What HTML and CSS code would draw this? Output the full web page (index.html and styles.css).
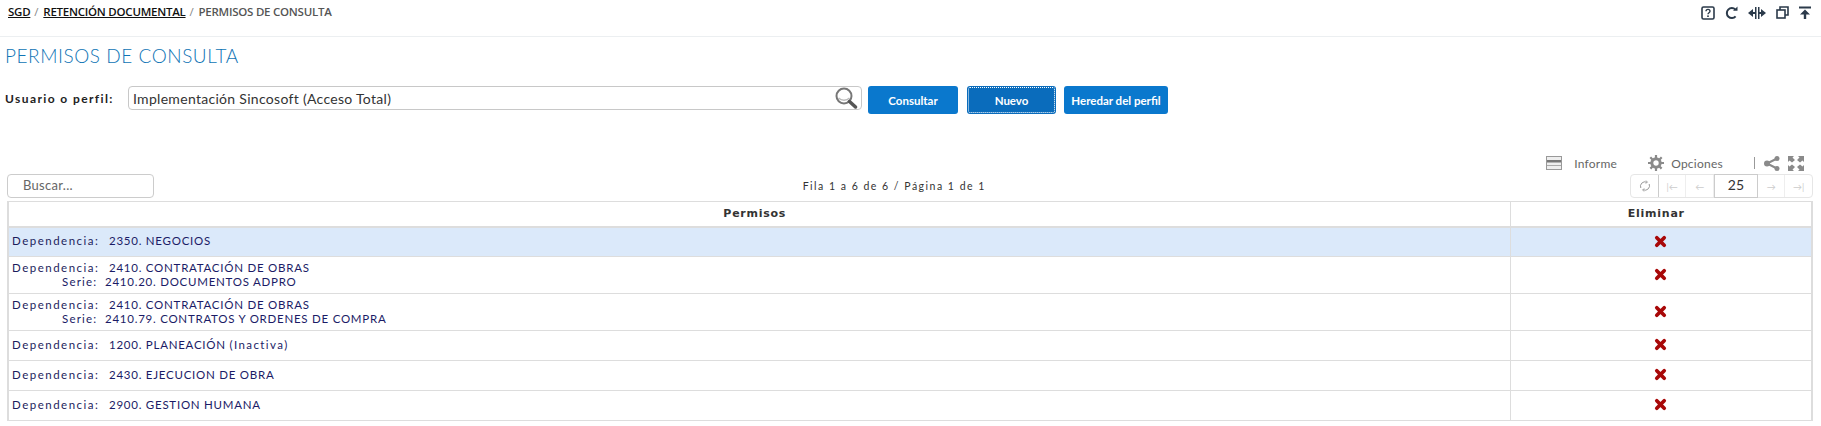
FILE: index.html
```html
<!DOCTYPE html>
<html>
  <head>
    <meta charset="utf-8">
    <title>Permisos de consulta</title>
    <link rel="stylesheet" href="styles.css">
  </head>
  <body>
    <svg class="defs" width="0" height="0">
      <symbol id="x-icon" viewBox="0 0 14 14"><path d="M3 3l8 8M11 3l-8 8" stroke="#a80808" stroke-width="4" stroke-linecap="round"/></symbol>
    </svg>

    <header class="topbar">
      <nav class="crumbs">
        <a href="#">SGD</a><span class="sep">/</span><a href="#">RETENCIÓN DOCUMENTAL</a><span class="sep">/</span><span>PERMISOS DE CONSULTA</span>
      </nav>
      <div class="top-icons">
        <svg width="14" height="14" viewBox="0 0 14 14"><rect x="1" y="1" width="12" height="12" rx="1.5" fill="none" stroke="#2b3a4a" stroke-width="1.6"/><path d="M5 5.2c0-2.4 4-2.4 4 0 0 1.5-2 1.5-2 3" fill="none" stroke="#2b3a4a" stroke-width="1.4"/><rect x="6.2" y="9.4" width="1.6" height="1.6" fill="#2b3a4a"/></svg>
        <svg width="13" height="14" viewBox="0 0 13 14"><path d="M10.6 10.4A5 5 0 1 1 10.4 3.6" fill="none" stroke="#2b3a4a" stroke-width="2"/><path d="M8 4.8h4.5V.5z" fill="#2b3a4a"/></svg>
        <svg width="18" height="14" viewBox="0 0 18 14"><rect x="7" y="1" width="1.5" height="12" fill="#2b3a4a"/><rect x="10" y="1" width="1.5" height="12" fill="#2b3a4a"/><path d="M0 7l5-4v8zM18 7l-5-4v8z" fill="#2b3a4a"/><rect x="3" y="6" width="4" height="2" fill="#2b3a4a"/><rect x="11" y="6" width="4" height="2" fill="#2b3a4a"/></svg>
        <svg width="13" height="13" viewBox="0 0 13 13"><rect x="1" y="4" width="8" height="8" fill="none" stroke="#2b3a4a" stroke-width="1.6"/><path d="M4 4V1h8v8H9" fill="none" stroke="#2b3a4a" stroke-width="1.6"/></svg>
        <svg width="12" height="13" viewBox="0 0 12 13"><rect x="0" y="0.5" width="12" height="2" fill="#2b3a4a"/><path d="M6 3.5l5 5H7.2V13H4.8V8.500H1z" fill="#2b3a4a"/></svg>
      </div>
    </header>

    <h1 class="title">PERMISOS DE CONSULTA</h1>

    <form class="filter">
      <label class="filter-label">Usuario o perfil:</label>
      <div class="lookup">
        <span class="lookup-text">Implementación Sincosoft (Acceso Total)</span>
        <svg width="26" height="22" viewBox="0 0 26 22"><circle cx="10" cy="9" r="7.500" fill="#fff" stroke="#777" stroke-width="2"/><path d="M4.500 11c3 3 8 3 11 0" fill="none" stroke="#bbb" stroke-width="1.500"/><path d="M15.500 14.500l6 5.500" stroke="#555" stroke-width="3.500" stroke-linecap="round"/></svg>
      </div>
      <button type="button" class="btn btn-consultar">Consultar</button>
      <button type="button" class="btn btn-nuevo">Nuevo</button>
      <button type="button" class="btn btn-heredar">Heredar del perfil</button>
    </form>

    <div class="tools">
      <svg width="16" height="14" viewBox="0 0 16 14"><rect x="0.500" y="0.500" width="15" height="13" fill="#eee" stroke="#999"/><rect x="1" y="4" width="14" height="2.500" fill="#777"/><path d="M1 9.500h14" stroke="#aaa"/></svg>
      <span class="tool-text tool-informe">Informe</span>
      <svg width="16" height="16" viewBox="0 0 16 16"><circle cx="8" cy="8" r="4.200" fill="none" stroke="#8a8a8a" stroke-width="3"/><path d="M8 0v16M0 8h16M2.300 2.300l11.400 11.400M13.700 2.300L2.300 13.700" stroke="#8a8a8a" stroke-width="2.200" stroke-dasharray="3 10 3"/></svg>
      <span class="tool-text tool-opciones">Opciones</span>
      <span class="tool-bar"></span>
      <svg width="16" height="15" viewBox="0 0 16 15"><path d="M13 2.500L3 7.500l10 5" fill="none" stroke="#8a8a8a" stroke-width="2"/><circle cx="13" cy="2.500" r="2.500" fill="#8a8a8a"/><circle cx="3" cy="7.500" r="3" fill="#8a8a8a"/><circle cx="13" cy="12.500" r="2.500" fill="#8a8a8a"/></svg>
      <svg class="tool-expand" width="16" height="15" viewBox="0 0 16 15"><path d="M0 0h6L4.500 1.500 7 4 4 6.500 1.500 4.500 0 6zM16 0h-6l1.500 1.500L9 4l3 2.500 2.500-2L16 6zM0 15h6l-1.500-1.500L7 11 4 8.500l-2.500 2L0 9zM16 15h-6l1.500-1.500L9 11l3-2.500 2.500 2L16 9z" fill="#8a8a8a"/></svg>
    </div>

    <div class="gridbar">
      <div class="search">Buscar...</div>
      <div class="rowinfo">Fila 1 a 6 de 6 / Página 1 de 1</div>
      <div class="pager">
        <span class="pg pg-reload">
          <svg width="12" height="12" viewBox="0 0 12 12"><path d="M1.800 8a4.500 4.500 0 0 1 6-5.800M10.200 4a4.500 4.500 0 0 1-6 5.800" fill="none" stroke="#999"/><path d="M7 0.500l1.500 1.800-2 1M5 11.500l-1.500-1.800 2-1" fill="none" stroke="#999" stroke-width="0.800"/></svg>
        </span>
        <span class="pg">|←</span>
        <span class="pg">←</span>
        <span class="pg pg-size">25</span>
        <span class="pg">→</span>
        <span class="pg pg-last">→|</span>
      </div>
    </div>

    <table class="grid">
      <thead>
        <tr><th>Permisos</th><th class="col-del">Eliminar</th></tr>
      </thead>
      <tbody>
        <tr class="row row-on">
          <td><span class="lbl">Dependencia:</span>2350. NEGOCIOS</td>
          <td class="col-del"><svg class="del"><use href="#x-icon"/></svg></td>
        </tr>
        <tr class="row row-two">
          <td>
            <div><span class="lbl">Dependencia:</span>2410. CONTRATACIÓN DE OBRAS</div>
            <div class="serie"><span class="lbl-s">Serie:</span>2410.20. DOCUMENTOS ADPRO</div>
          </td>
          <td class="col-del"><svg class="del"><use href="#x-icon"/></svg></td>
        </tr>
        <tr class="row row-two">
          <td>
            <div><span class="lbl">Dependencia:</span>2410. CONTRATACIÓN DE OBRAS</div>
            <div class="serie"><span class="lbl-s">Serie:</span>2410.79. CONTRATOS Y ORDENES DE COMPRA</div>
          </td>
          <td class="col-del"><svg class="del"><use href="#x-icon"/></svg></td>
        </tr>
        <tr class="row">
          <td><span class="lbl">Dependencia:</span>1200. PLANEACIÓN <span class="state">(Inactiva)</span></td>
          <td class="col-del"><svg class="del"><use href="#x-icon"/></svg></td>
        </tr>
        <tr class="row">
          <td><span class="lbl">Dependencia:</span>2430. EJECUCION DE OBRA</td>
          <td class="col-del"><svg class="del"><use href="#x-icon"/></svg></td>
        </tr>
        <tr class="row">
          <td><span class="lbl">Dependencia:</span>2900. GESTION HUMANA</td>
          <td class="col-del"><svg class="del"><use href="#x-icon"/></svg></td>
        </tr>
      </tbody>
    </table>
  </body>
</html>
```

FILE: styles.css
```css
html, body {
  margin: 0;
  padding: 0;
  background: #fff;
  overflow: hidden;
}

body {
  font-family: "Lato", "Liberation Sans", sans-serif;
  height: 426px;
}

.defs {
  display: block;
}

.topbar {
  display: flex;
  justify-content: space-between;
  height: 36px;
  border-bottom: 1px solid #eceff1;
}

.crumbs {
  padding: 3px 0 0 8px;
  font-family: "Open Sans", sans-serif;
  font-size: 11.5px;
  font-weight: 600;
  line-height: 17px;
  color: #555;
  letter-spacing: -0.25px;
}

.crumbs a {
  color: #111;
  text-decoration: underline;
}

.crumbs .sep {
  margin: 0 5px 0 4px;
  color: #888;
  font-weight: 400;
}

.top-icons {
  display: flex;
  align-items: center;
  gap: 10px;
  height: 13px;
  padding: 6px 10px 0 0;
}

.title {
  margin: 0;
  padding: 7px 0 0 5px;
  height: 24px;
  font-size: 19px;
  font-weight: 300;
  line-height: 24px;
  letter-spacing: 0.55px;
  color: #0f74b5;
}

.filter {
  display: flex;
  align-items: flex-start;
  padding: 18px 0 0 5px;
  height: 28px;
}

.filter-label {
  width: 123px;
  font-size: 12px;
  font-weight: 700;
  line-height: 26px;
  letter-spacing: 1.4px;
  color: #222;
}

.lookup {
  display: flex;
  justify-content: space-between;
  align-items: center;
  box-sizing: border-box;
  width: 734px;
  height: 24px;
  padding: 0 1px 0 4px;
  border: 1px solid #c8c8c8;
  border-radius: 4px;
  font-size: 14px;
  color: #333;
}

.lookup-text {
  letter-spacing: 0.3px;
}

.btn {
  height: 28px;
  padding: 0;
  border: 0;
  border-radius: 3px;
  background: #0a78cd;
  color: #fff;
  font-family: "Lato", sans-serif;
  font-size: 11.5px;
  font-weight: 700;
  white-space: nowrap;
}

.btn-consultar {
  width: 90px;
  margin-left: 6px;
}

.btn-nuevo {
  width: 89px;
  margin-left: 9px;
  background: #0a6cbc;
  outline: 1px dotted #fff;
  outline-offset: -2px;
}

.btn-heredar {
  width: 104px;
  margin-left: 8px;
}

.tools {
  display: flex;
  align-items: center;
  justify-content: flex-end;
  height: 16px;
  margin-top: 41px;
  padding-right: 17px;
  font-size: 12px;
  color: #666;
}

.tool-text {
  letter-spacing: 0.25px;
}

.tool-informe {
  margin: 0 31px 0 12px;
}

.tool-opciones {
  margin-left: 7px;
}

.tool-bar {
  width: 1px;
  height: 12px;
  margin: 0 9px 0 31px;
  background: #999;
}

.tool-expand {
  margin-left: 8px;
}

.gridbar {
  display: flex;
  justify-content: space-between;
  align-items: center;
  height: 24px;
  margin-top: 3px;
  padding: 0 8px 0 7px;
}

.search {
  box-sizing: border-box;
  width: 147px;
  height: 24px;
  padding-left: 15px;
  border: 1px solid #ccc;
  border-radius: 4px;
  font-size: 13px;
  line-height: 21px;
  letter-spacing: 0.3px;
  color: #666;
}

.rowinfo {
  margin-left: 4px;
  font-size: 10.5px;
  letter-spacing: 1.5px;
  color: #333;
}

.pager {
  display: flex;
  box-sizing: border-box;
  height: 24px;
  border: 1px solid #e6e6e6;
  border-radius: 4px;
  font-size: 9px;
  color: #ccc;
}

.pg {
  display: flex;
  align-items: center;
  justify-content: center;
  width: 26.5px;
  border-right: 1px solid #eee;
}

.pg-reload {
  border-right-color: #ccc;
  border-radius: 4px 0 0 4px;
}

.pg-size {
  box-sizing: border-box;
  width: 44px;
  margin: -1px 0;
  padding-bottom: 3px;
  border: 1px solid #ccc;
  background: #fff;
  font-size: 14px;
  color: #333;
}

.pg-last {
  border-right: 0;
}

.grid {
  box-sizing: border-box;
  width: 1806px;
  margin: 3px 0 0 7px;
  border-collapse: collapse;
  border-top: 1px solid #ddd;
  border-left: 2px solid #ddd;
  border-right: 2px solid #ddd;
  table-layout: fixed;
  font-size: 11.5px;
  color: #1b1b66;
}

.grid th {
  box-sizing: border-box;
  height: 25px;
  padding: 0 9px 0 0;
  border-bottom: 2px solid #ddd;
  font-family: "DejaVu Sans", sans-serif;
  font-size: 11px;
  letter-spacing: 0.75px;
  color: #333;
}

.grid .col-del {
  width: 302px;
  border-left: 1px solid #ddd;
  text-align: center;
}

.grid td {
  padding: 0 0 1px 3px;
  border-bottom: 1px solid #ddd;
  letter-spacing: 0.75px;
  line-height: 14px;
}

.grid td.col-del {
  padding: 0 0 3px;
}

.row {
  height: 30px;
}

.row-two {
  height: 37px;
}

.row-on td {
  background: #dbe9fa;
}

.lbl {
  display: inline-block;
  width: 97px;
  letter-spacing: 1.5px;
  color: #1c1c5c;
}

.state {
  letter-spacing: 1.4px;
}

.serie {
  padding-left: 50px;
}

.lbl-s {
  display: inline-block;
  width: 43px;
  letter-spacing: 1.2px;
}

.del {
  display: inline-block;
  width: 13px;
  height: 13px;
  vertical-align: middle;
}
```
